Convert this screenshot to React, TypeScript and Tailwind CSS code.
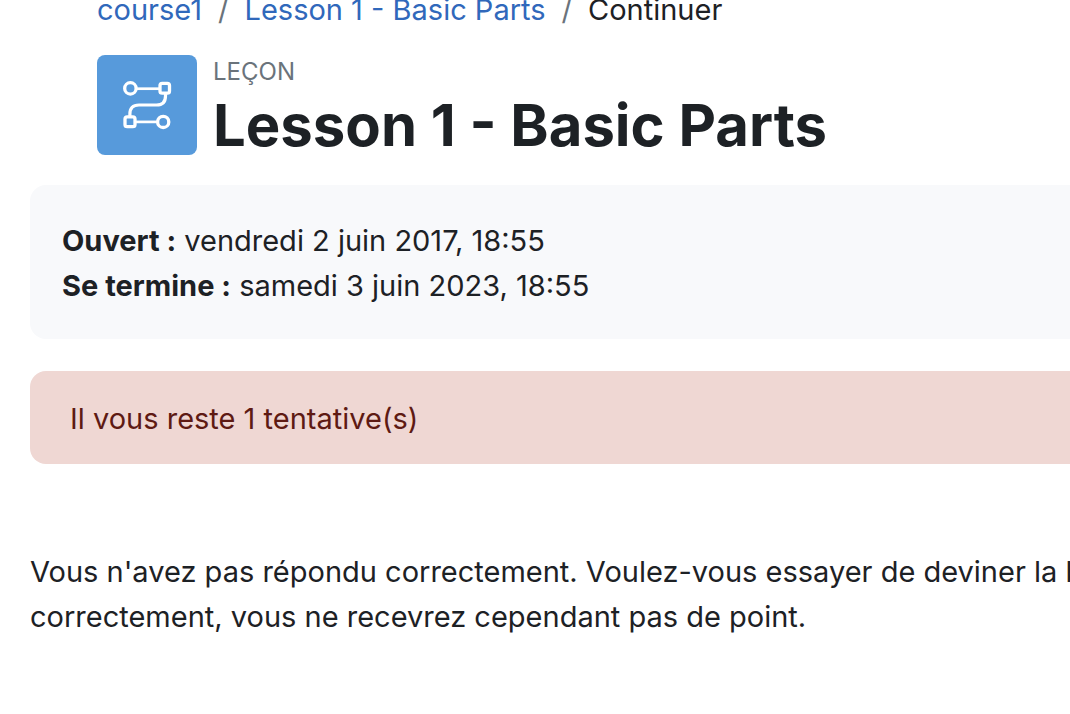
import React from "react";

function LessonIcon() {
  return (
    <svg viewBox="0 0 100 100" className="h-full w-full" fill="none" stroke="#fff" aria-hidden="true">
      <g strokeWidth="3.3">
        <path d="M40 33.700H62" strokeWidth="2.700" />
        <path d="M39 66.900H60" strokeWidth="2.700" />
        <path d="M68.500 39V41Q68.500 50 59.500 50H42Q32.900 50 32.900 59V61" strokeWidth="3.200" />
        <circle cx="33.400" cy="33.400" r="5.700" />
        <circle cx="66.200" cy="66.900" r="5.600" />
        <rect x="63" y="28.400" width="9.500" height="9.800" rx="2.200" />
        <rect x="28" y="61.900" width="10" height="9.700" rx="2.200" />
      </g>
    </svg>
  );
}

export default function App() {
  return (
    <div className="overflow-x-hidden bg-white font-['Inter',sans-serif] text-[29px] leading-[45px] text-[#1d2125]">
      <nav aria-label="Fil d'Ariane" className="pl-[97px]">
        <ol className="flex gap-4 whitespace-nowrap leading-5">
          <li><a href="#course" className="text-[#3068bb]">course1</a></li>
          <li aria-hidden="true" className="text-[#6a737b]">/</li>
          <li><a href="#lesson" className="text-[#3068bb]">Lesson 1 - Basic Parts</a></li>
          <li aria-hidden="true" className="text-[#6a737b]">/</li>
          <li aria-current="page">Continuer</li>
        </ol>
      </nav>

      <header className="mt-[35px] flex items-start gap-4 pl-[97px]">
        <div className="size-[100px] shrink-0 rounded-lg bg-[#579adb]">
          <LessonIcon />
        </div>
        <div className="whitespace-nowrap">
          <div className="text-2xl leading-[34px] text-[#6a737b]">LEÇON</div>
          <h1 className="text-[58px] font-bold leading-[72px]">Lesson 1 - Basic Parts</h1>
        </div>
      </header>

      <main className="pl-[30px]">
        <section className="mt-6 rounded-l-2xl bg-[#f8f9fb] px-8 pb-[31px] pt-[33px]">
          <div><strong>Ouvert :</strong> vendredi 2 juin 2017, 18:55</div>
          <div><strong>Se termine :</strong> samedi 3 juin 2023, 18:55</div>
        </section>

        <div role="alert" className="mt-8 rounded-l-2xl bg-[#efd7d3] px-10 pb-[23px] pt-[25px] text-[#5e1a13]">
          Il vous reste 1 tentative(s)
        </div>

        <p className="mt-[85px] whitespace-nowrap pb-[75px]">
          Vous n'avez pas répondu correctement. Voulez-vous essayer de deviner la bonne
          <br />
          correctement, vous ne recevrez cependant pas de point.
        </p>
      </main>
    </div>
  );
}
